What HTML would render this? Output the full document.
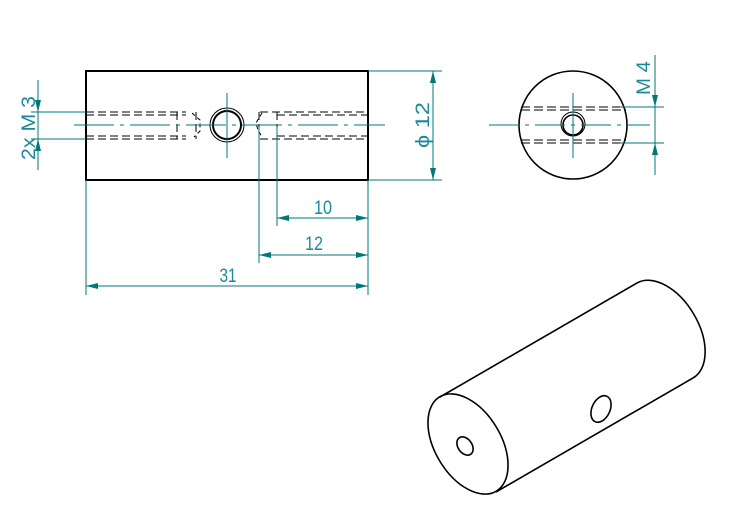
<!DOCTYPE html>
<html><head><style>html,body{margin:0;padding:0;background:#fff}svg{display:block}</style></head>
<body>
<svg width="755" height="525" viewBox="0 0 755 525" xmlns="http://www.w3.org/2000/svg">
<defs>
<marker id="a" viewBox="0 0 12 6" refX="12" refY="3" markerWidth="12" markerHeight="6" orient="auto" markerUnits="userSpaceOnUse"><path d="M12,3 L0,0 L0,6 Z" fill="#007878"/></marker>
</defs>
<g fill="none" stroke-width="1">
<rect x="86" y="71" width="282" height="109" stroke="#000" stroke-width="2"/>
<g stroke="#000" stroke-dasharray="8,4">
<line x1="86" y1="112" x2="186" y2="112"/><line x1="86" y1="115" x2="186" y2="115"/>
<line x1="86" y1="136" x2="186" y2="136"/><line x1="86" y1="139" x2="186" y2="139"/>
<line x1="260" y1="112" x2="368" y2="112"/><line x1="277" y1="115" x2="368" y2="115"/>
<line x1="277" y1="136" x2="368" y2="136"/><line x1="260" y1="139" x2="368" y2="139"/>
<line x1="177" y1="112" x2="177" y2="139"/><line x1="196" y1="112" x2="196" y2="139"/>
<line x1="277" y1="112" x2="277" y2="139"/><line x1="259" y1="112" x2="259" y2="139"/>
</g>
<path d="M192,113 L200,120 L200,131 L194,137" stroke="#000" stroke-dasharray="4,3"/>
<path d="M262,113 L256,123 L258,130 L262,137" stroke="#000" stroke-dasharray="4,3"/>
<circle cx="227" cy="125" r="17" stroke="#000"/>
<circle cx="227" cy="125" r="14" stroke="#000" stroke-width="2"/>
<g stroke="#007878">
<line x1="74" y1="125" x2="385" y2="125" stroke-dasharray="40,6,4,6"/>
<line x1="227" y1="93" x2="227" y2="158"/>
<line x1="31" y1="112" x2="86" y2="112"/><line x1="31" y1="139" x2="86" y2="139"/>
<line x1="38" y1="80" x2="38" y2="170"/>
<line x1="38" y1="100" x2="38" y2="112" marker-end="url(#a)"/>
<line x1="38" y1="151" x2="38" y2="139" marker-end="url(#a)"/>
<line x1="368" y1="71" x2="442" y2="71"/><line x1="368" y1="180" x2="442" y2="180"/>
<line x1="433" y1="71" x2="433" y2="180"/>
<line x1="433" y1="100" x2="433" y2="71" marker-end="url(#a)"/>
<line x1="433" y1="150" x2="433" y2="180" marker-end="url(#a)"/>
<line x1="86" y1="180" x2="86" y2="295"/><line x1="368" y1="180" x2="368" y2="295"/>
<line x1="259" y1="127" x2="259" y2="263"/><line x1="277" y1="127" x2="277" y2="226"/>
<line x1="277" y1="218" x2="368" y2="218"/>
<line x1="300" y1="218" x2="277" y2="218" marker-end="url(#a)"/><line x1="345" y1="218" x2="368" y2="218" marker-end="url(#a)"/>
<line x1="259" y1="255" x2="368" y2="255"/>
<line x1="280" y1="255" x2="259" y2="255" marker-end="url(#a)"/><line x1="345" y1="255" x2="368" y2="255" marker-end="url(#a)"/>
<line x1="86" y1="286" x2="368" y2="286"/>
<line x1="110" y1="286" x2="86" y2="286" marker-end="url(#a)"/><line x1="345" y1="286" x2="368" y2="286" marker-end="url(#a)"/>
</g>
<circle cx="573" cy="125" r="54" stroke="#000" stroke-width="1.6"/>
<g stroke="#000" stroke-dasharray="9,4">
<line x1="521" y1="107" x2="626" y2="107"/><line x1="521" y1="110" x2="626" y2="110"/>
<line x1="521" y1="140" x2="626" y2="140"/><line x1="521" y1="143" x2="626" y2="143"/>
</g>
<circle cx="573" cy="124" r="12" stroke="#000"/>
<circle cx="573" cy="125" r="10" stroke="#000" stroke-width="1.6"/>
<g stroke="#007878">
<line x1="489" y1="125" x2="650" y2="125" stroke-dasharray="30,6,4,6"/>
<line x1="573" y1="93" x2="573" y2="158"/>
<line x1="620" y1="107" x2="664" y2="107"/><line x1="620" y1="143" x2="664" y2="143"/>
<line x1="655" y1="55" x2="655" y2="175"/>
<line x1="655" y1="95" x2="655" y2="107" marker-end="url(#a)"/>
<line x1="655" y1="155" x2="655" y2="143" marker-end="url(#a)"/>
</g>
<g stroke="#000" stroke-width="1.6">
<ellipse cx="468" cy="444" rx="55" ry="33" transform="rotate(59 468 444)"/>
<path d="M637,283 A55,33 59 0 1 693,378"/>
<line x1="440" y1="397" x2="637" y2="283"/>
<line x1="496" y1="492" x2="693" y2="378"/>
<ellipse cx="465" cy="446" rx="7" ry="10" transform="rotate(-35 465 446)"/>
<ellipse cx="601" cy="409" rx="9" ry="14" transform="rotate(25 601 409)"/>
</g>
</g>
<g fill="#1a8a9a" font-family="Liberation Sans, sans-serif" font-size="19" style="font-stretch:condensed">
<text x="323" y="214" text-anchor="middle" textLength="18" lengthAdjust="spacingAndGlyphs">10</text>
<text x="314" y="250" text-anchor="middle" textLength="18" lengthAdjust="spacingAndGlyphs">12</text>
<text x="228" y="282" text-anchor="middle" textLength="17" lengthAdjust="spacingAndGlyphs">31</text>
<text transform="translate(35,128) rotate(-90)" text-anchor="middle" textLength="64" lengthAdjust="spacingAndGlyphs">2x M 3</text>
<text transform="translate(429,125) rotate(-90)" text-anchor="middle" textLength="46" lengthAdjust="spacingAndGlyphs">ϕ 12</text>
<text transform="translate(650,78) rotate(-90)" text-anchor="middle" textLength="34" lengthAdjust="spacingAndGlyphs">M 4</text>
</g>
</svg>
</body></html>
